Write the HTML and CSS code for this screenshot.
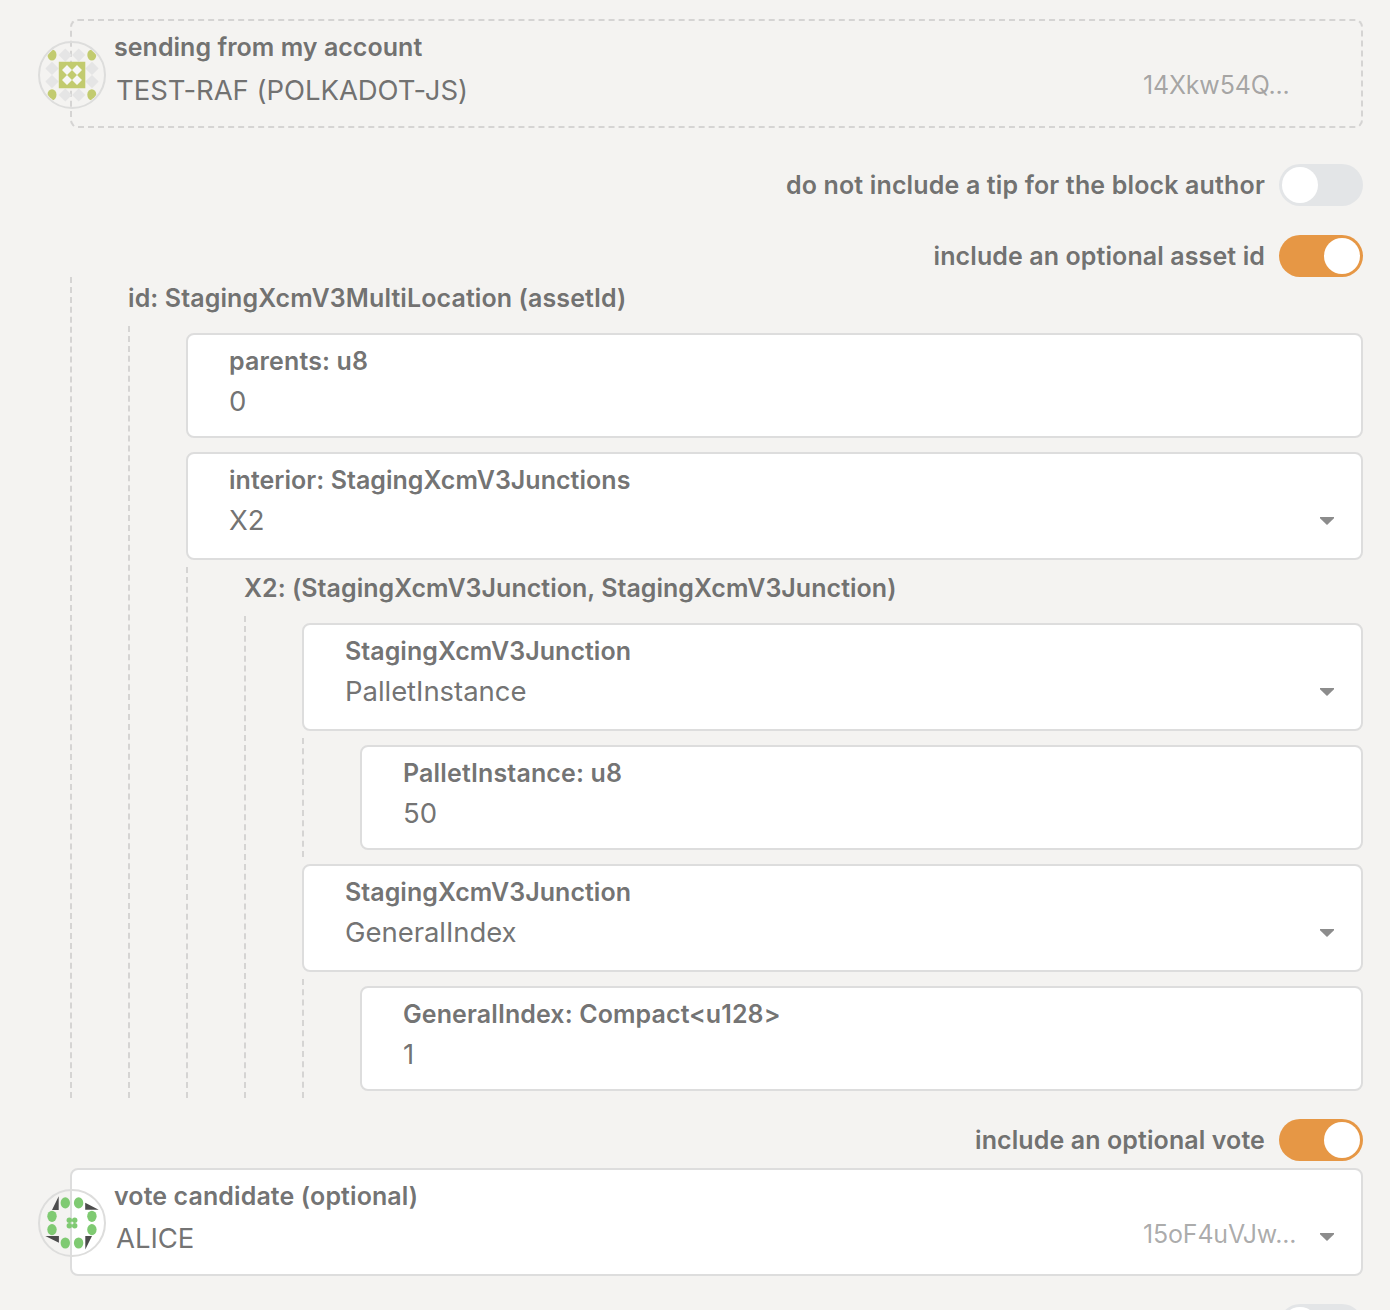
FILE: index.html
```html
<!DOCTYPE html>
<html lang="en">
<head>
<meta charset="utf-8">
<title>Sign and submit</title>
<link rel="stylesheet" href="styles.css">
</head>
<body>
<main class="form">
  <section class="field account readonly">
    <svg class="identicon" viewBox="0 0 68 68">
      <clipPath id="disc"><circle cx="34" cy="34" r="31.6"/></clipPath>
      <g fill="#e5e5e5">
        <path d="M27.3 7.5l6.6 6.6-6.6 6.6-6.6-6.6zM40.7 7.5l6.6 6.6-6.6 6.6-6.6-6.6zM27.3 47.4l6.6 6.6-6.6 6.6-6.6-6.6zM40.7 47.4l6.6 6.6-6.6 6.6-6.6-6.6z"/>
        <path d="M14 20.8l6.6 6.6-6.6 6.6-6.6-6.6zM14 34l6.6 6.6-6.6 6.6-6.6-6.6zM54 20.8l6.6 6.6-6.6 6.6-6.6-6.6zM54 34l6.6 6.6-6.6 6.6-6.6-6.6z"/>
      </g>
      <g fill="#c2cb6f" clip-path="url(#disc)">
        <ellipse cx="14" cy="14" rx="4.5" ry="5.6"/><ellipse cx="53.8" cy="14" rx="4.5" ry="5.6"/>
        <ellipse cx="14" cy="53.8" rx="4.5" ry="5.6"/><ellipse cx="53.8" cy="53.8" rx="4.5" ry="5.6"/>
        <path d="M20.8 20.8h26.5v26.5h-26.5z"/>
      </g>
      <path fill="#f7f7f6" d="M29 24l5 5-5 5-5-5zM39 24l5 5-5 5-5-5zM29 34l5 5-5 5-5-5zM39 34l5 5-5 5-5-5z"/>
      <circle cx="34" cy="34" r="33" fill="none" stroke="#dddddc" stroke-width="2"/>
    </svg>
    <div class="label tight">sending from my account</div>
    <div class="account-row">
      <span class="value">TEST-RAF (POLKADOT-JS)</span>
      <span class="address">14Xkw54Q...</span>
    </div>
  </section>

  <div class="toggle-row tip">
    <span class="label wide">do not include a tip for the block author</span><span class="toggle"></span>
  </div>
  <div class="toggle-row asset">
    <span class="label">include an optional asset id</span><span class="toggle on"></span>
  </div>

  <div class="nested">
    <div class="heading label">id: StagingXcmV3MultiLocation (assetId)</div>
    <div class="nested">
      <section class="field short">
        <div class="label wide">parents: u8</div>
        <div class="value">0</div>
      </section>
      <section class="field">
        <div class="label tight">interior: StagingXcmV3Junctions</div>
        <div class="select"><span class="value">X2</span><i class="caret"></i></div>
      </section>
      <div class="nested">
        <div class="heading label tight">X2: (StagingXcmV3Junction, StagingXcmV3Junction)</div>
        <div class="nested">
          <section class="field">
            <div class="label tight">StagingXcmV3Junction</div>
            <div class="select"><span class="value">PalletInstance</span><i class="caret"></i></div>
          </section>
          <div class="nested">
            <section class="field short">
              <div class="label wide">PalletInstance: u8</div>
              <div class="value">50</div>
            </section>
          </div>
          <section class="field">
            <div class="label tight">StagingXcmV3Junction</div>
            <div class="select"><span class="value">GeneralIndex</span><i class="caret"></i></div>
          </section>
          <div class="nested">
            <section class="field short">
              <div class="label">GeneralIndex: Compact&lt;u128&gt;</div>
              <div class="value">1</div>
            </section>
          </div>
        </div>
      </div>
    </div>
  </div>

  <div class="toggle-row vote">
    <span class="label">include an optional vote</span><span class="toggle on"></span>
  </div>

  <section class="field account candidate">
    <svg class="identicon" viewBox="0 0 68 68">
      <path fill="#4c4c4c" d="M20.7 7.3V21H14zM47.2 13.8l13.5 7H47.2zM47.3 47.1H54l-6.7 13.5zM7.3 47.1h13.6v6.7z"/>
      <g fill="#7fca72">
        <ellipse cx="27.3" cy="13.9" rx="4.7" ry="5.6"/><ellipse cx="40.6" cy="13.9" rx="4.7" ry="5.6"/>
        <ellipse cx="14" cy="27.3" rx="4.7" ry="5.6"/><ellipse cx="14" cy="40.6" rx="4.7" ry="5.6"/>
        <ellipse cx="53.9" cy="27.3" rx="4.7" ry="5.6"/><ellipse cx="53.9" cy="40.6" rx="4.7" ry="5.6"/>
        <ellipse cx="27.3" cy="54" rx="4.7" ry="5.6"/><ellipse cx="40.6" cy="54" rx="4.7" ry="5.6"/>
        <circle cx="31.3" cy="31.3" r="2.7"/><circle cx="36.7" cy="31.3" r="2.7"/>
        <circle cx="31.3" cy="36.7" r="2.7"/><circle cx="36.7" cy="36.7" r="2.7"/>
      </g>
      <circle cx="34" cy="34" r="33" fill="none" stroke="#dddddc" stroke-width="2"/>
    </svg>
    <div class="label">vote candidate (optional)</div>
    <div class="account-row">
      <span class="value">ALICE</span>
      <span class="address">15oF4uVJw...</span>
      <i class="caret"></i>
    </div>
  </section>

  <div class="toggle-row last"><span class="toggle"></span></div>
</main>
</body>
</html>
```
FILE: styles.css
```css
* {
  box-sizing: border-box;
}

body {
  margin: 0;
  background: #f4f3f1;
  color: rgba(78, 78, 78, 0.8);
  font-family: Inter, "Liberation Sans", sans-serif;
}

.form {
  height: 1310px;
  padding: 19px 27px 0 70px;
  overflow: hidden;
}

.label {
  font-size: 25px;
  font-weight: 600;
  line-height: 32px;
  letter-spacing: 0.1px;
  white-space: nowrap;
}

.label.tight {
  letter-spacing: 0.03px;
}

.label.wide {
  letter-spacing: 0.15px;
}

.value {
  font-size: 27.5px;
  line-height: 40px;
  letter-spacing: -0.05px;
  white-space: nowrap;
}

.field {
  position: relative;
  height: 108px;
  padding: 10px 27px 0 41px;
  border: 2px solid #dddddd;
  border-radius: 8px;
  background: #fff;
}

.field.short {
  height: 105px;
}

.field > .value,
.select {
  margin-top: 4px;
}

.select {
  display: flex;
  align-items: center;
  justify-content: space-between;
}

.caret {
  width: 14px;
  height: 8px;
  margin-top: 2px;
  background: #8c8c8c;
  clip-path: polygon(0 0, 100% 0, 100% 15%, 50% 100%, 0 15%);
}

/* Account pickers carry an identicon over their left border */
.account {
  padding-left: 42px;
}

.account.readonly {
  height: 109px;
  border: 2px dashed #d5d4d3;
  background: none;
}

.identicon {
  position: absolute;
  left: -34px;
  top: 20px;
  width: 68px;
  height: 68px;
}

.candidate .identicon {
  top: 19px;
}

.account-row {
  display: flex;
  align-items: flex-start;
  padding-left: 2px;
}

.account-row .value {
  flex: 1;
  margin-top: 7px;
}

.candidate .account-row .value {
  margin-top: 6px;
}

.address {
  flex: 0 0 177px;
  margin-top: 6px;
  color: rgba(78, 78, 78, 0.48);
  font-size: 25px;
  line-height: 32px;
  letter-spacing: -0.18px;
}

.readonly .address {
  margin-right: 14px;
}

.account-row .caret {
  margin-top: 21px;
}

.toggle-row {
  display: flex;
  align-items: center;
  justify-content: flex-end;
  gap: 14px;
}

.toggle-row.tip {
  margin-top: 36px;
}

.toggle-row.asset {
  margin-top: 29px;
}

.toggle-row.vote {
  margin: 21px 0 7px;
}

.toggle-row.last {
  margin-top: 28px;
}

.toggle {
  display: flex;
  width: 84px;
  height: 42px;
  padding: 3px;
  border-radius: 21px;
  background: #e3e5e7;
}

.toggle::before {
  content: "";
  width: 36px;
  height: 36px;
  border-radius: 50%;
  background: #fff;
}

.toggle.on {
  justify-content: flex-end;
  background: #e69745;
}

/* Each nesting level is marked by a dashed rule */
.nested {
  display: flex;
  flex-direction: column;
  padding-left: 56px;
  border-left: 2px dashed #d5d4d3;
}

.nested > .heading {
  height: 49px;
  padding-top: 5px;
}

.nested > .field {
  margin: 7px 0;
}
```
